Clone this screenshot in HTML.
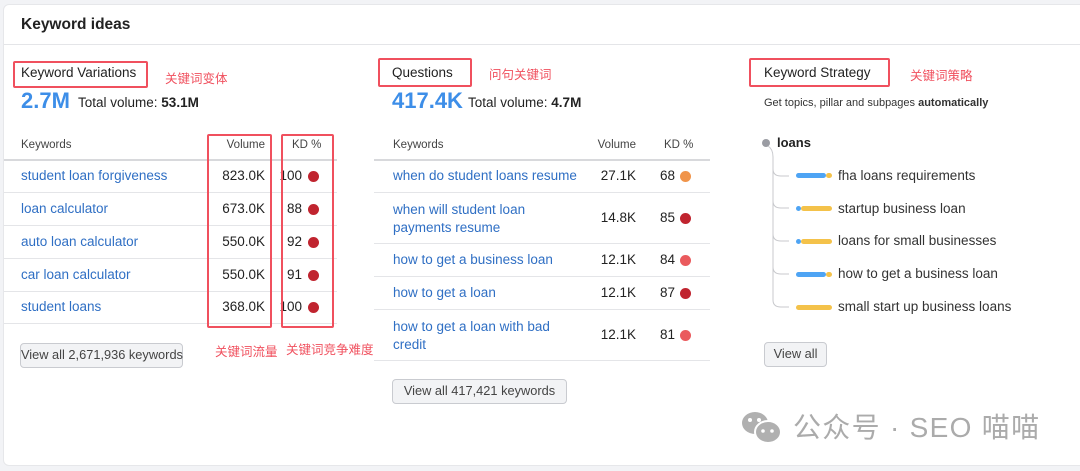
<!DOCTYPE html>
<html><head><meta charset="utf-8"><style>
*{margin:0;padding:0;box-sizing:border-box}
body{width:1080px;height:471px;background:#f2f3f6;font-family:"Liberation Sans","Noto Sans CJK SC",sans-serif;color:#222;position:relative;overflow:hidden}
.card{position:absolute;left:3px;top:4px;width:1090px;height:462px;background:#fff;border-radius:6px;border:1px solid #e6e7ea}
.a{position:absolute;white-space:nowrap;line-height:16px}
.t{font-size:13.5px}
.lnk{color:#2f6fc4;font-size:13.5px}
.rb{position:absolute;border:2px solid #f0505e;border-radius:2px}
.ann{position:absolute;color:#f0505e;font-size:12.5px;line-height:16px;white-space:nowrap}
.hl{position:absolute;height:1px;background:#e4e5e8}
.hd{position:absolute;height:2px;background:#d8d9dc}
.dot{position:absolute;width:11px;height:11px;border-radius:50%}
.big{position:absolute;color:#3d8ee8;font-weight:bold;font-size:22px;line-height:24px}
.btn{position:absolute;background:#f2f3f5;border:1px solid #c9cbd0;border-radius:4px;font-size:12.8px;color:#444;line-height:22px;text-align:center;white-space:nowrap}
.bar{position:absolute;height:5px;border-radius:3px}
.r{text-align:right}
</style></head><body>
<div class="card"></div>
<div class="a" style="left:21px;top:16px;font-size:15.5px;font-weight:bold;line-height:18px">Keyword ideas</div>
<div class="hl" style="left:4px;top:44px;width:1076px"></div>

<!-- left col -->
<div class="rb" style="left:13px;top:61px;width:135px;height:27px"></div>
<div class="a t" style="left:21px;top:65px">Keyword Variations</div>
<div class="ann" style="left:165px;top:71px">关键词变体</div>
<div class="big" style="left:21px;top:89px">2.7M</div>
<div class="a t" style="left:78px;top:95px">Total volume: <b>53.1M</b></div>
<div class="a" style="left:21px;top:137px;font-size:11.5px;color:#444">Keywords</div>
<div class="a r" style="left:205px;top:137px;width:60px;font-size:11.5px;color:#444">Volume</div>
<div class="a" style="left:292px;top:137px;font-size:11.5px;color:#444">KD %</div>
<div class="hd" style="left:4px;top:159px;width:333px"></div>
<div class="hl" style="left:4px;top:192px;width:333px"></div>
<div class="hl" style="left:4px;top:225px;width:333px"></div>
<div class="hl" style="left:4px;top:258px;width:333px"></div>
<div class="hl" style="left:4px;top:291px;width:333px"></div>
<div class="hl" style="left:4px;top:323px;width:333px"></div>
<div class="a lnk" style="left:21px;top:168px">student loan forgiveness</div>
<div class="a lnk" style="left:21px;top:201px">loan calculator</div>
<div class="a lnk" style="left:21px;top:234px">auto loan calculator</div>
<div class="a lnk" style="left:21px;top:267px">car loan calculator</div>
<div class="a lnk" style="left:21px;top:299px">student loans</div>
<div class="a t r" style="left:200px;top:168px;width:65px">823.0K</div>
<div class="a t r" style="left:200px;top:201px;width:65px">673.0K</div>
<div class="a t r" style="left:200px;top:234px;width:65px">550.0K</div>
<div class="a t r" style="left:200px;top:267px;width:65px">550.0K</div>
<div class="a t r" style="left:200px;top:299px;width:65px">368.0K</div>
<div class="a t r" style="left:278px;top:168px;width:24px">100</div>
<div class="a t r" style="left:278px;top:201px;width:24px">88</div>
<div class="a t r" style="left:278px;top:234px;width:24px">92</div>
<div class="a t r" style="left:278px;top:267px;width:24px">91</div>
<div class="a t r" style="left:278px;top:299px;width:24px">100</div>
<div class="dot" style="left:308px;top:171px;background:#c0242f"></div>
<div class="dot" style="left:308px;top:204px;background:#c0242f"></div>
<div class="dot" style="left:308px;top:237px;background:#c0242f"></div>
<div class="dot" style="left:308px;top:270px;background:#c0242f"></div>
<div class="dot" style="left:308px;top:302px;background:#c0242f"></div>
<div class="rb" style="left:207px;top:134px;width:65px;height:194px"></div>
<div class="rb" style="left:281px;top:134px;width:53px;height:194px"></div>
<div class="btn" style="left:20px;top:343px;width:163px;height:25px">View all 2,671,936 keywords</div>
<div class="ann" style="left:215px;top:344px">关键词流量</div>
<div class="ann" style="left:286px;top:342px">关键词竞争难度</div>

<!-- middle col -->
<div class="rb" style="left:378px;top:58px;width:94px;height:29px"></div>
<div class="a t" style="left:392px;top:65px">Questions</div>
<div class="ann" style="left:489px;top:67px">问句关键词</div>
<div class="big" style="left:392px;top:89px">417.4K</div>
<div class="a t" style="left:468px;top:95px">Total volume: <b>4.7M</b></div>
<div class="a" style="left:393px;top:137px;font-size:11.5px;color:#444">Keywords</div>
<div class="a r" style="left:576px;top:137px;width:60px;font-size:11.5px;color:#444">Volume</div>
<div class="a" style="left:664px;top:137px;font-size:11.5px;color:#444">KD %</div>
<div class="hd" style="left:374px;top:159px;width:336px"></div>
<div class="hl" style="left:374px;top:192px;width:336px"></div>
<div class="hl" style="left:374px;top:243px;width:336px"></div>
<div class="hl" style="left:374px;top:276px;width:336px"></div>
<div class="hl" style="left:374px;top:309px;width:336px"></div>
<div class="hl" style="left:374px;top:360px;width:336px"></div>
<div class="a lnk" style="left:393px;top:168px">when do student loans resume</div>
<div class="a lnk" style="left:393px;top:201px;line-height:18px">when will student loan<br>payments resume</div>
<div class="a lnk" style="left:393px;top:252px">how to get a business loan</div>
<div class="a lnk" style="left:393px;top:285px">how to get a loan</div>
<div class="a lnk" style="left:393px;top:318px;line-height:18px">how to get a loan with bad<br>credit</div>
<div class="a t r" style="left:576px;top:168px;width:60px">27.1K</div>
<div class="a t r" style="left:576px;top:210px;width:60px">14.8K</div>
<div class="a t r" style="left:576px;top:252px;width:60px">12.1K</div>
<div class="a t r" style="left:576px;top:285px;width:60px">12.1K</div>
<div class="a t r" style="left:576px;top:327px;width:60px">12.1K</div>
<div class="a t r" style="left:650px;top:168px;width:25px">68</div>
<div class="a t r" style="left:650px;top:210px;width:25px">85</div>
<div class="a t r" style="left:650px;top:252px;width:25px">84</div>
<div class="a t r" style="left:650px;top:285px;width:25px">87</div>
<div class="a t r" style="left:650px;top:327px;width:25px">81</div>
<div class="dot" style="left:680px;top:171px;background:#f0944a"></div>
<div class="dot" style="left:680px;top:213px;background:#c0242f"></div>
<div class="dot" style="left:680px;top:255px;background:#ea5a5d"></div>
<div class="dot" style="left:680px;top:288px;background:#c0242f"></div>
<div class="dot" style="left:680px;top:330px;background:#ea5a5d"></div>
<div class="btn" style="left:392px;top:379px;width:175px;height:25px">View all 417,421 keywords</div>

<!-- right col -->
<div class="rb" style="left:749px;top:58px;width:141px;height:29px"></div>
<div class="a t" style="left:764px;top:65px">Keyword Strategy</div>
<div class="ann" style="left:910px;top:68px">关键词策略</div>
<div class="a" style="left:764px;top:95px;font-size:11px;color:#333">Get topics, pillar and subpages <b>automatically</b></div>
<svg style="position:absolute;left:755px;top:135px" width="50" height="180">
<circle cx="11" cy="8" r="4" fill="#9a9ca3"/>
<path d="M13 11 Q18 14 18 22 L18 165 Q18 172 26 172 L34 172 M18 34 Q18 41 26 41 L34 41 M18 66 Q18 73 26 73 L34 73 M18 99 Q18 106 26 106 L34 106 M18 132 Q18 139 26 139 L34 139" stroke="#c8c9cd" fill="none" stroke-width="1"/>
</svg>
<div class="a" style="left:777px;top:135px;font-size:13px;font-weight:bold">loans</div>
<div class="bar" style="left:796px;top:173px;width:30px;background:#4ea4f4"></div><div class="bar" style="left:826px;top:173px;width:6px;background:#f4c24a"></div>
<div class="bar" style="left:796px;top:206px;width:5px;background:#4ea4f4"></div><div class="bar" style="left:801px;top:206px;width:31px;background:#f4c24a"></div>
<div class="bar" style="left:796px;top:239px;width:5px;background:#4ea4f4"></div><div class="bar" style="left:801px;top:239px;width:31px;background:#f4c24a"></div>
<div class="bar" style="left:796px;top:272px;width:30px;background:#4ea4f4"></div><div class="bar" style="left:826px;top:272px;width:6px;background:#f4c24a"></div>
<div class="bar" style="left:796px;top:305px;width:36px;background:#f4c24a"></div>
<div class="a t" style="left:838px;top:168px;color:#333">fha loans requirements</div>
<div class="a t" style="left:838px;top:201px;color:#333">startup business loan</div>
<div class="a t" style="left:838px;top:233px;color:#333">loans for small businesses</div>
<div class="a t" style="left:838px;top:266px;color:#333">how to get a business loan</div>
<div class="a t" style="left:838px;top:299px;color:#333">small start up business loans</div>
<div class="btn" style="left:764px;top:342px;width:63px;height:25px">View all</div>

<!-- watermark -->
<svg style="position:absolute;left:741px;top:411px" width="42" height="34" viewBox="0 0 42 34">
<ellipse cx="14" cy="12" rx="13" ry="11" fill="#b0b0b0"/>
<ellipse cx="27" cy="21" rx="13" ry="11" fill="#b0b0b0" stroke="#fff" stroke-width="2"/>
<circle cx="9" cy="9" r="2" fill="#fff"/><circle cx="18" cy="9" r="2" fill="#fff"/>
<circle cx="22" cy="20" r="1.8" fill="#fff"/><circle cx="31" cy="20" r="1.8" fill="#fff"/>
</svg>
<div class="a" style="left:793px;top:412px;font-size:28px;line-height:32px;color:#ababab;letter-spacing:1.3px">公众号 · SEO 喵喵</div>
</body></html>
